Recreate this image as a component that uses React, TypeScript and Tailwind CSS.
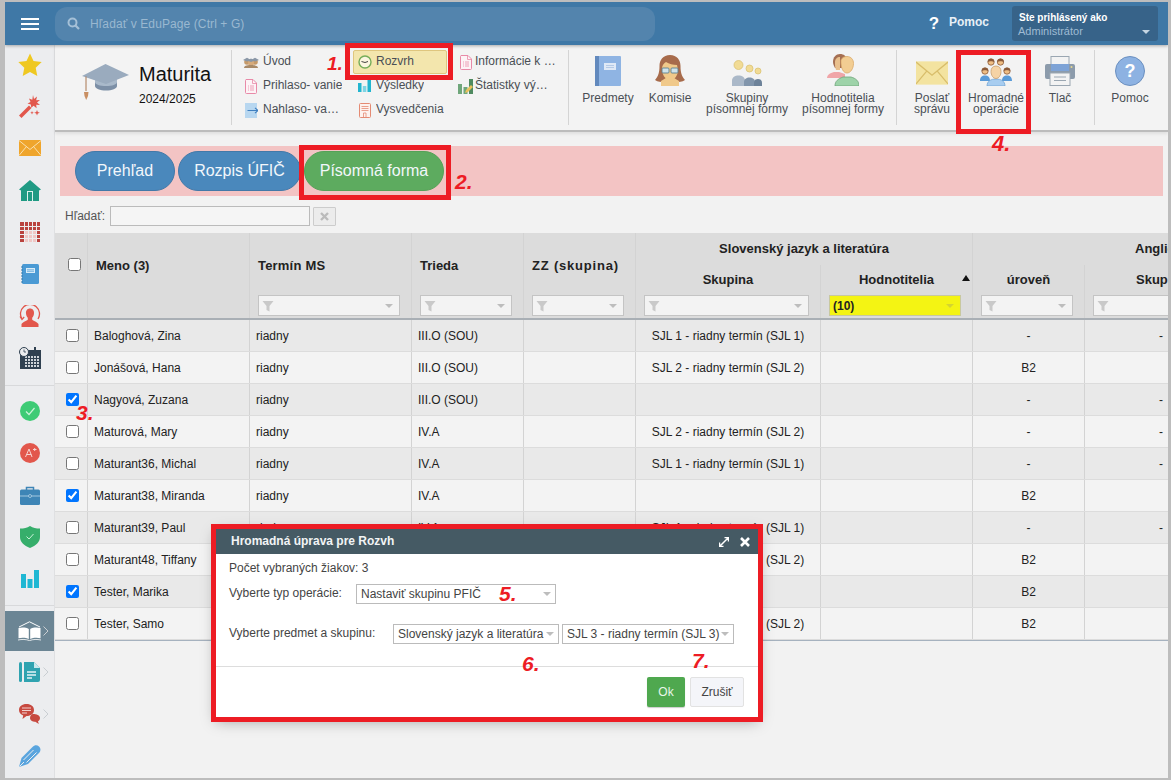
import React from "react";

const GRID = "grid grid-cols-[33px_162px_162px_112px_112px_185px_152px_112px_83px]";

type Row = { n: string; c?: boolean; t: string; z: string; s: string; u: string; l: string };
const rows: Row[] = [
  { n: "Baloghová, Zina", t: "riadny", z: "III.O (SOU)", s: "SJL 1 - riadny termín (SJL 1)", u: "-", l: "-" },
  { n: "Jonášová, Hana", t: "riadny", z: "III.O (SOU)", s: "SJL 2 - riadny termín (SJL 2)", u: "B2", l: "" },
  { n: "Nagyová, Zuzana", c: true, t: "riadny", z: "III.O (SOU)", s: "", u: "-", l: "-" },
  { n: "Maturová, Mary", t: "riadny", z: "IV.A", s: "SJL 2 - riadny termín (SJL 2)", u: "-", l: "-" },
  { n: "Maturant36, Michal", t: "riadny", z: "IV.A", s: "SJL 1 - riadny termín (SJL 1)", u: "-", l: "-" },
  { n: "Maturant38, Miranda", c: true, t: "riadny", z: "IV.A", s: "", u: "B2", l: "" },
  { n: "Maturant39, Paul", t: "riadny", z: "IV.A", s: "SJL 1 - riadny termín (SJL 1)", u: "-", l: "-" },
  { n: "Maturant48, Tiffany", t: "riadny", z: "IV.A", s: "SJL 2 - riadny termín (SJL 2)", u: "B2", l: "" },
  { n: "Tester, Marika", c: true, t: "riadny", z: "IV.A", s: "", u: "B2", l: "" },
  { n: "Tester, Samo", t: "riadny", z: "IV.A", s: "SJL 2 - riadny termín (SJL 2)", u: "B2", l: "" },
];

function Funnel() {
  return (
    <svg width="12" height="12" viewBox="0 0 12 12" className="shrink-0">
      <path d="M0.5 1h11L7.5 6v5.5L4.5 10V6z" fill="#c9c9c9" />
    </svg>
  );
}
function Caret({ color = "#bdbdbd" }: { color?: string }) {
  return (
    <svg width="8" height="4" viewBox="0 0 8 4" className="shrink-0">
      <path d="M0 0h8L4 4z" fill={color} />
    </svg>
  );
}
function Filter({ yellow }: { yellow?: boolean }) {
  return (
    <div
      className={
        yellow
          ? "ml-[8px] mr-[11px] h-[21px] flex items-center justify-between px-[3px] pr-[6px] border border-[#c8c8a0] bg-[#f4f413] text-[12px] font-bold text-[#222]"
          : "ml-[8px] mr-[11px] h-[21px] flex items-center justify-between pl-[3px] pr-[6px] border border-[#c4c4c4] bg-[#f3f3f3]"
      }
    >
      {yellow ? <span>(10)</span> : <Funnel />}
      <Caret color={yellow ? "#d5d530" : "#bdbdbd"} />
    </div>
  );
}
function FilterCell({ clip, yellow }: { clip?: boolean; yellow?: boolean }) {
  return (
    <div className={"border-r border-[#d3d3d3] pt-[3px] " + (clip ? "overflow-hidden border-r-0" : "")}>
      {clip ? (
        <div className="ml-[8px] w-[110px] h-[21px] flex items-center pl-[3px] border border-[#c4c4c4] bg-[#f3f3f3]">
          <Funnel />
        </div>
      ) : (
        <Filter yellow={yellow} />
      )}
    </div>
  );
}

/* ---------- sidebar icons ---------- */
const Star = () => (
  <svg width="24" height="23" viewBox="0 0 24 23"><path d="M12 0.5l3.5 7.6 8.2 1-6 5.7 1.6 8.2L12 18.9 4.700 23l1.6-8.200-6-5.700 8.200-1z" fill="#efc821" /></svg>
);
const Wand = () => (
  <svg width="24" height="24" viewBox="0 0 24 24">
    <path d="M1 21.500L11 11.500l2.500 2.500L3.500 24z" fill="#e2574c" />
    <path d="M15 1l1 4 3-2.500-.8 3.800 3.800-.3-3 2.500 3 2.500-3.800-.2.400 3.400-3-2.400-2.300 2-.5-3.400-3.300-.8 3-1.700-1.500-3.500 3.300 1.300z" fill="#e2574c" />
    <path d="M19 16l.8 2 2 .8-2 .8-.8 2-.8-2-2-.8 2-.8zM14 17l.5 1.200 1.200.5-1.200.5-.5 1.200-.5-1.200-1.200-.5 1.200-.5z" fill="#e2574c" />
  </svg>
);
const MailIcon = ({ w = 22, h = 16, fill = "#efa52c", line = "#fbe6bd" }: { w?: number; h?: number; fill?: string; line?: string }) => (
  <svg width={w} height={h} viewBox="0 0 22 16">
    <rect width="22" height="16" fill={fill} />
    <path d="M0 0.500L11 9.500 22 0.500M0 15.500L7.500 6.500M22 15.500L14.500 6.500" fill="none" stroke={line} strokeWidth="0.900" />
  </svg>
);
const Home = () => (
  <svg width="22" height="21" viewBox="0 0 22 21">
    <path d="M11 0L22 9.500 20 10.500V21H2V10.500L0 9.500z" fill="#1f9a83" />
    <rect x="8" y="11" width="6" height="10" fill="#dff3ee" />
    <rect x="9" y="12" width="4" height="9" fill="#1f9a83" />
  </svg>
);
const Timetable = () => (
  <svg width="20" height="20" viewBox="0 0 20 20">
    <rect width="20" height="20" fill="#b9433f" />
    <path d="M0 4.500h20M0 8.500h20M0 12.500h20M0 16.500h20M4.500 0v20M8.500 0v20M12.500 0v20M16.500 0v20" stroke="#ecedef" strokeWidth="1" />
    <rect x="5" y="9" width="11" height="11" fill="#f0c8c6" />
    <path d="M5 12.500h15M5 16.500h15M8.500 9v11M12.500 9v11M16.500 9v11" stroke="#ecedef" strokeWidth="1" />
  </svg>
);
const Notebook = () => (
  <svg width="18" height="20" viewBox="0 0 18 20">
    <rect x="1" width="17" height="20" rx="1.500" fill="#4a9ad4" />
    <rect x="5" y="4" width="9" height="5" fill="#d8ecf8" />
    <path d="M6 5.800h7M6 7.300h7" stroke="#4a9ad4" strokeWidth=".7" />
    <path d="M0 3h2M0 6h2M0 9h2M0 12h2M0 15h2M0 18h2" stroke="#2f78ad" strokeWidth="1" />
  </svg>
);
const UserRing = () => (
  <svg width="22" height="23" viewBox="0 0 22 23">
    <path d="M3 14a9.500 9.500 0 1 1 16 0" fill="none" stroke="#e2574c" strokeWidth="1.300" />
    <path d="M1 11.500l2 3 2.200-2.500" fill="none" stroke="#e2574c" strokeWidth="1.200" />
    <path d="M11 3.500c2.800 0 4.300 2.200 4 5-.2 2-.9 3.400-1.800 4.300v1.700c0 1 4.800 2 6.300 4.500V22H2.500v-3c1.500-2.500 6.300-3.500 6.300-4.500v-1.700C7.900 11.900 7.200 10.500 7 8.500c-.3-2.800 1.200-5 4-5z" fill="#e2574c" />
  </svg>
);
const CalIcon = () => (
  <svg width="22" height="22" viewBox="0 0 22 22">
    <rect x="1" y="3" width="21" height="19" fill="#2f4050" />
    <rect x="15" y="0" width="2" height="5" fill="#2f4050" />
    <g fill="#cdd3d8">
      {[10, 13, 16, 19].map((y) =>
        [6, 9, 12, 15, 18].map((x) => <rect key={x + "-" + y} x={x} y={y - 1} width="2" height="2" />)
      )}
    </g>
    <circle cx="5" cy="5" r="4.500" fill="#ecedef" stroke="#2f4050" strokeWidth="1" />
    <path d="M5 2.500V5h2" fill="none" stroke="#2f4050" strokeWidth=".8" />
  </svg>
);
const Check = () => (
  <svg width="20" height="20" viewBox="0 0 20 20">
    <circle cx="10" cy="10" r="10" fill="#3ecb75" />
    <path d="M6 10.500l3 3 5.500-6.500" fill="none" stroke="#c9f2d8" strokeWidth="1.200" />
  </svg>
);
const APlus = () => (
  <svg width="20" height="20" viewBox="0 0 20 20">
    <circle cx="10" cy="10" r="10" fill="#e2574c" />
    <path d="M5.500 14l3.500-8 3 8M6.800 11.500h4.500M13 6.500h3.500M14.700 5v3" fill="none" stroke="#f6d4d1" strokeWidth="1" />
  </svg>
);
const Briefcase = () => (
  <svg width="20" height="19" viewBox="0 0 20 19">
    <path d="M6.500 4V1.500h7V4" fill="none" stroke="#3e85b6" strokeWidth="1.500" />
    <rect y="3.500" width="20" height="15.500" rx="1.500" fill="#3e85b6" />
    <path d="M0 10h20" stroke="#bcd8ea" strokeWidth=".8" />
    <circle cx="10" cy="10" r="1.500" fill="#3e85b6" stroke="#bcd8ea" strokeWidth=".7" />
  </svg>
);
const Shield = () => (
  <svg width="20" height="22" viewBox="0 0 20 22">
    <path d="M10 0c3 2 6 2.500 10 2.500V11c0 5-4 8.500-10 11C4 19.500 0 16 0 11V2.500C4 2.500 7 2 10 0z" fill="#36ae6b" />
    <path d="M6.500 10.500l2.500 2.500 4.500-5" fill="none" stroke="#c9f2d8" strokeWidth="1" />
  </svg>
);
const Bars = () => (
  <svg width="18" height="18" viewBox="0 0 18 18">
    <rect x="0" y="4" width="5" height="14" fill="#1fb7d3" />
    <rect x="6.500" y="9" width="5" height="9" fill="#1fb7d3" />
    <rect x="13" y="0" width="5" height="18" fill="#1fb7d3" />
  </svg>
);
const Book = () => (
  <svg width="23" height="20" viewBox="0 0 23 20">
    <path d="M1 6L11.500 0.800 22 6" fill="none" stroke="#fff" strokeWidth="1" />
    <path d="M0.500 7c3-.8 7.500-.8 10.300 1v10c-2.800-1.600-7.300-1.600-10.300-.8zM22.500 7c-3-.8-7.500-.8-10.300 1v10c2.800-1.600 7.300-1.600 10.300-.8z" fill="#fff" />
    <path d="M0 19c4-.8 8-.8 11.500.6 3.500-1.400 7.500-1.400 11.500-.6" fill="none" stroke="#fff" strokeWidth=".8" />
  </svg>
);
const DocTeal = () => (
  <svg width="21" height="20" viewBox="0 0 21 20">
    <rect x="0" y="0" width="3" height="20" rx="1.500" fill="#2fa3b0" />
    <path d="M5 0h10l6 6v12a2 2 0 0 1-2 2H5z" fill="#2fa3b0" />
    <path d="M15 0l6 6h-6z" fill="#c9e9ed" />
    <path d="M8 10h9M8 13h9M8 16h5" stroke="#e3f4f6" strokeWidth="1.300" />
  </svg>
);
const Chat = () => (
  <svg width="21" height="20" viewBox="0 0 21 20">
    <path d="M7.500 0C12 0 15 2.500 15 6s-3 6-7.500 6l-4 3 .7-3.600C1.500 10.500 0 8.500 0 6 0 2.500 3 0 7.500 0z" fill="#c74a40" />
    <path d="M14 10c3.500 0 7 1.300 7 4 0 1.500-.8 2.600-2 3.200l.8 2.800-3.500-2.200c-2.800 0-5.300-1.500-5.300-3.800 0-2 1.500-4 3-4z" fill="#c74a40" />
    <path d="M3 4h9M3 6.500h9M3 9h5" stroke="#f2d0cd" strokeWidth="1" />
  </svg>
);
const Pen = () => (
  <svg width="22" height="22" viewBox="0 0 22 22">
    <path d="M0 22L2.500 13 13.500 2c2-2 4.500-2.200 6.500-.5 2 2 1.800 4.500 0 6.500L9 19z" fill="#5aa5de" />
    <path d="M4.500 15l10-10M7.500 17.500l10-10M0.500 21.500L5 17" fill="none" stroke="#ecedef" strokeWidth="1" />
  </svg>
);

function Chevron() {
  return (
    <svg width="6" height="10" viewBox="0 0 6 10" className="absolute right-[5px] top-1/2 -translate-y-1/2">
      <path d="M0.500 0.500L5 5 0.500 9.500" fill="none" stroke="#c9ced2" strokeWidth="1" />
    </svg>
  );
}
function SideItem({ children, h = "h-[42px]", chev, active }: { children: React.ReactNode; h?: string; chev?: boolean; active?: boolean }) {
  return (
    <div className={"relative flex items-center justify-center " + h + (active ? " bg-[#6b8594]" : "")}>
      {children}
      {chev && <Chevron />}
    </div>
  );
}

/* ---------- toolbar icons ---------- */
const Cap = () => (
  <svg width="47" height="36" viewBox="0 0 47 36">
    <path d="M13 13v9c0 2.500 5 4.500 11 4.500S35 24.500 35 22v-9z" fill="#7c8fa6" />
    <path d="M13 13v5c0 2.500 5 4 11 4s11-1.500 11-4v-5z" fill="#a9b9ca" />
    <path d="M23.500 0L47 11 24 20 0 12z" fill="#9aabbe" />
    <path d="M4 12.500V27" stroke="#a97750" strokeWidth="1" />
    <path d="M2 28h4.500l-.5 4-1.800 4-1.700-4z" fill="#c98f62" />
  </svg>
);
const SmDoc = ({ c = "#e88aa8", bg = "#fdf3f6" }: { c?: string; bg?: string }) => (
  <svg width="12" height="15" viewBox="0 0 12 15">
    <path d="M1 .5h7l3.500 3.500v9.500a1 1 0 0 1-1 1h-9a1 1 0 0 1-1-1V1.500a1 1 0 0 1 1-1z" fill={bg} stroke={c} />
    <path d="M7.500.5v4h4M3 7h1M3 9h1M3 11h1M5 7h4M5 9h4M5 11h4" fill="none" stroke={c} strokeWidth=".8" />
  </svg>
);
const SmArrow = () => (
  <svg width="13" height="15" viewBox="0 0 13 15">
    <rect x="0" y="0" width="12" height="15" fill="#b8d7f0" />
    <path d="M2.500 7.500H13M10 4.800l3 2.700-3 2.700" fill="none" stroke="#3f7fc0" strokeWidth="1.100" />
  </svg>
);
const SmPeople = () => (
  <svg width="16" height="11" viewBox="0 0 16 11">
    <circle cx="4" cy="5" r="2.800" fill="#c59a6a" />
    <circle cx="12" cy="5" r="2.800" fill="#c59a6a" />
    <path d="M0 3L4 .8 8 3 4 4.500zM8 3l4-2.200L16 3l-4 1.500z" fill="#8a97a6" />
    <circle cx="8" cy="6" r="3" fill="#d6ab7c" />
    <path d="M4 3.500L8 1.500 12 3.500 8 5z" fill="#8a97a6" />
    <path d="M1 11c0-2 2-3 7-3s7 1 7 3z" fill="#a98a68" />
  </svg>
);
const SmClock = () => (
  <svg width="14" height="14" viewBox="0 0 14 14">
    <circle cx="7" cy="7" r="6" fill="#fbf6e0" stroke="#76ad5a" strokeWidth="1.400" />
    <path d="M3.500 6.500L7 7.500l3-1" fill="none" stroke="#444" strokeWidth="1" />
  </svg>
);
const SmBars = () => (
  <svg width="13" height="12" viewBox="0 0 13 12">
    <rect x="0" y="3" width="3.500" height="9" fill="#22b5cf" />
    <rect x="4.800" y="6" width="3.500" height="6" fill="#7fd5e4" />
    <rect x="9.500" y="0" width="3.500" height="12" fill="#22b5cf" />
  </svg>
);
const SmCert = () => (
  <svg width="12" height="15" viewBox="0 0 12 15">
    <rect x=".5" y=".5" width="11" height="14" rx="1" fill="#fdf2ee" stroke="#e48a73" />
    <path d="M2.500 3.500h7M2.500 5.500h7M2.500 7.500h7" stroke="#e48a73" strokeWidth=".8" />
    <path d="M4.500 14v-4h2.500v4" fill="none" stroke="#e48a73" strokeWidth=".8" />
  </svg>
);
const SmStats = () => (
  <svg width="16" height="15" viewBox="0 0 16 15">
    <rect x="0" y="5" width="4" height="10" fill="#6fa67a" />
    <rect x="5.500" y="8" width="4" height="7" fill="#6fa67a" />
    <rect x="11" y="0" width="4" height="15" fill="#4f8a60" />
    <path d="M7 14l1-3 5-5 2 2-5 5z" fill="#e8c25c" />
  </svg>
);
const BookBlue = () => (
  <svg width="26" height="30" viewBox="0 0 26 30">
    <rect width="26" height="30" rx="1" fill="#8fb4e3" />
    <rect width="4" height="30" fill="#6289bd" />
    <rect x="9" y="7" width="12" height="7" fill="#dfe9f6" />
    <path d="M11 9.500h8M11 11.500h8" stroke="#a9c2e2" strokeWidth=".8" />
  </svg>
);
const Woman = () => (
  <svg width="30" height="31" viewBox="0 0 30 31">
    <path d="M15 0c7 0 10.500 5 10.500 11 0 6 1 10 4.500 14-3 2-6 2-9 2H9c-3 0-6 0-9-2 3.500-4 4.500-8 4.500-14C4.500 5 8 0 15 0z" fill="#a76b4b" />
    <path d="M7 14c0-4 2-6 4-7 3 2 7 3 11 3l1 5c0 5-3 10-8 10s-8-6-8-11z" fill="#f0c98a" />
    <path d="M6 26c3-2 5-3 6-4h6c1 1 3 2 6 4v5H6z" fill="#f0c98a" />
    <rect x="7" y="13" width="7" height="5" rx="1" fill="#cfe3ea" stroke="#5c7f8e" strokeWidth=".9" />
    <rect x="16" y="13" width="7" height="5" rx="1" fill="#cfe3ea" stroke="#5c7f8e" strokeWidth=".9" />
  </svg>
);
const Groups = () => (
  <svg width="33" height="26" viewBox="0 0 33 26">
    <circle cx="7.500" cy="5" r="4.500" fill="#f1db95" stroke="#d9bf6c" strokeWidth=".7" />
    <circle cx="18.500" cy="8.500" r="3.500" fill="#f1db95" stroke="#d9bf6c" strokeWidth=".7" />
    <circle cx="27" cy="11" r="3" fill="#f1db95" stroke="#d9bf6c" strokeWidth=".7" />
    <path d="M1 26v-5c0-4 3-5.500 6.500-5.500s6.500 1.500 6.500 5.500v5z" fill="#aab8c8" />
    <path d="M13 26v-4c0-3 2.500-4.500 5.500-4.500S24 19 24 22v4z" fill="#8195ab" />
    <path d="M23 26v-3.500c0-2.500 2-3.500 4-3.500s4 1 4 3.500V26z" fill="#6d8299" />
  </svg>
);
const Assessors = () => (
  <svg width="32" height="32" viewBox="0 0 32 32">
    <path d="M6 8c0-5 3-8 7-8s6 2 7 6v8H8c-1-2-2-4-2-6z" fill="#a56f52" />
    <path d="M0 24c0-3 3-5 7-6h5l6 2v4z" fill="#f0a5a8" />
    <path d="M8 8c0-3 2-5 5-5v13H9C8 14 8 11 8 8z" fill="#e9c08d" />
    <path d="M14 6c1-2.500 3.500-3.500 6-3.500 4 0 6.500 3 6.500 7 0 5-3 9.500-6.500 9.500s-6.500-4.500-6-13z" fill="#f2cd92" stroke="#d9a868" strokeWidth=".8" />
    <path d="M8 32c0-5 3-7 8-9h8c5 1.500 8 4 8 9z" fill="#9ed3a9" stroke="#6ea57a" strokeWidth=".8" />
  </svg>
);
const PeopleMany = () => (
  <svg width="32" height="29" viewBox="0 0 32 29">
    <g fill="#efbe84" stroke="#8a5a3a" strokeWidth=".8">
      <circle cx="11" cy="5" r="3.200" />
      <circle cx="20.500" cy="5" r="3.200" />
      <circle cx="5" cy="14" r="3.200" />
      <circle cx="27" cy="14" r="3.200" />
    </g>
    <path d="M7.800 5a3.200 3.200 0 0 1 6.400 0c-1.500-1-5-1-6.400 0zM17.300 5a3.200 3.200 0 0 1 6.400 0c-1.500-1-5-1-6.400 0zM1.800 14a3.200 3.200 0 0 1 6.400 0c-1.500-1-5-1-6.400 0zM23.800 14a3.200 3.200 0 0 1 6.400 0c-1.500-1-5-1-6.400 0z" fill="#8a5a3a" />
    <path d="M0 24c0-4 2-5.500 5-5.500s5 1.500 5 5.500zM22 24c0-4 2-5.500 5-5.500s5 1.500 5 5.500z" fill="#5a9bd8" />
    <path d="M7 29c0-5 4-7 9-7s9 2 9 7z" fill="#a8cdf0" stroke="#6a9fd0" strokeWidth=".7" />
    <path d="M16 9c3.500 0 5 2.500 5 5.500 0 3.500-2 7-5 7s-5-3.500-5-7C11 11.500 12.500 9 16 9z" fill="#f5d3a5" stroke="#c9a06f" strokeWidth=".8" />
  </svg>
);
const Printer = () => (
  <svg width="30" height="30" viewBox="0 0 30 30">
    <rect x="6" y="0.500" width="18" height="10" fill="#f3f3f3" stroke="#9ba7b2" />
    <rect x="0" y="8" width="30" height="15" rx="2" fill="#8c9bab" />
    <rect x="6" y="8" width="18" height="7" fill="#7ea3d6" />
    <rect x="5" y="17" width="20" height="12.500" fill="#f3f3f3" stroke="#9ba7b2" />
    <path d="M9 21h12M9 24.500h12" stroke="#9ba7b2" />
    <circle cx="26.500" cy="11" r="1" fill="#e9d98c" />
  </svg>
);
const HelpBig = () => (
  <svg width="30" height="30" viewBox="0 0 30 30">
    <circle cx="15" cy="15" r="14.500" fill="#8db2e2" stroke="#6b8fbf" />
    <text x="15" y="21" textAnchor="middle" fontSize="18" fontWeight="700" fill="#fff" fontFamily="Liberation Sans, sans-serif">?</text>
  </svg>
);

function SmallTool({ icon, label, w, box, sel }: { icon: React.ReactNode; label: string; w: string; box: string; sel?: boolean }) {
  return (
    <div
      className={
        "h-[24px] flex items-center " +
        w +
        (sel ? " border border-[#dfc67e] rounded-[2px] bg-[#f3e6ad]" : "")
      }
    >
      <div className={"flex justify-center shrink-0 " + box}>{icon}</div>
      <span className="truncate -mt-[2px]">{label}</span>
    </div>
  );
}
function BigTool({ icon, label, w }: { icon: React.ReactNode; label: React.ReactNode; w: string }) {
  return (
    <div className={"flex flex-col items-center " + w}>
      <div className="h-[32px] flex items-end justify-center">{icon}</div>
      <div className="mt-[7px] text-center leading-[11px]">{label}</div>
    </div>
  );
}
const Divider = () => <div className="w-px h-[75px] bg-[#d4d4d4] shrink-0" />;

function Head({ children, cls }: { children?: React.ReactNode; cls: string }) {
  return <div className={"border-r border-[#d3d3d3] " + cls}>{children}</div>;
}
function Sel({ w, label }: { w: string; label: string }) {
  return (
    <div className={"h-[20px] flex items-center justify-between pl-[4px] pr-[4px] border border-[#bbb] bg-white text-[12px] text-[#444] whitespace-nowrap " + w}>
      <span>{label}</span>
      <Caret />
    </div>
  );
}
function Note({ children, cls }: { children: React.ReactNode; cls: string }) {
  return (
    <span className={"absolute z-50 font-bold italic text-[#ed1c24] leading-none pointer-events-none " + cls}>{children}</span>
  );
}
function RedBox({ cls }: { cls: string }) {
  return <div className={"absolute z-40 border-[5px] border-[#ed1c24] pointer-events-none " + cls} />;
}

export default function App() {
  return (
    <div className="relative w-[1171px] h-[780px] overflow-hidden bg-[#bdbdbd] pt-[2px] pb-[2px] pl-[5px] pr-[3px] text-[12px] text-[#222] font-['Liberation_Sans',Arial,sans-serif]">
      <div className="relative w-full h-full flex flex-col overflow-hidden bg-[#f2f2f2]">
        {/* top bar */}
        <header className="relative z-10 h-[43px] shrink-0 flex items-center bg-[#3f78a6] shadow-[0_1px_3px_rgba(0,0,0,0.3)]">
          <div className="w-[50px] flex flex-col items-center gap-[3px]">
            <div className="w-[18px] h-[2px] bg-white" />
            <div className="w-[18px] h-[2px] bg-white" />
            <div className="w-[18px] h-[2px] bg-white" />
          </div>
          <div className="w-[600px] h-[34px] flex items-center rounded-[12px] bg-[#5384ad] pl-[12px]">
            <svg width="13" height="13" viewBox="0 0 13 13">
              <circle cx="5.500" cy="5.500" r="4" fill="none" stroke="#a5c0d7" strokeWidth="2" />
              <path d="M8.500 8.500L12 12" stroke="#a5c0d7" strokeWidth="2.200" />
            </svg>
            <span className="ml-[10px] tracking-[0.1px] text-[#9ab8d0]">Hľadať v EduPage (Ctrl + G)</span>
          </div>
          <span className="ml-[273px] w-[12px] text-center text-[17px] font-bold leading-none text-white">?</span>
          <span className="ml-[9px] -mt-[3px] font-bold text-[#e8f0f6]">Pomoc</span>
          <div className="ml-[23px] w-[146px] h-[35px] rounded-[3px] bg-[#376389] pl-[7px] pt-[5px] relative">
            <div className="text-[10px] font-bold leading-[13px] text-white">Ste prihlásený ako</div>
            <div className="text-[11px] leading-[15px] -ml-px text-[#9fbbd3]">Administrátor</div>
            <div className="absolute right-[8px] top-[24px]">
              <Caret color="#c5d5e2" />
            </div>
          </div>
        </header>

        <div className="flex flex-1 min-h-0">
          {/* sidebar */}
          <aside className="w-[50px] shrink-0 bg-[#ecedef] border-r border-[#dfe0e2] text-center">
            <SideItem h="h-[42px] -mt-[2px]"><Star /></SideItem>
            <SideItem><Wand /></SideItem>
            <SideItem><MailIcon /></SideItem>
            <SideItem><Home /></SideItem>
            <SideItem><Timetable /></SideItem>
            <SideItem><Notebook /></SideItem>
            <SideItem><UserRing /></SideItem>
            <SideItem><CalIcon /></SideItem>
            <div className="mt-[6px] mb-[4px] h-px bg-[#d8d9db]" />
            <SideItem><Check /></SideItem>
            <SideItem><APlus /></SideItem>
            <SideItem><Briefcase /></SideItem>
            <SideItem><Shield /></SideItem>
            <SideItem><Bars /></SideItem>
            <div className="mt-[5px] mb-[5px] h-px bg-[#d8d9db]" />
            <SideItem h="h-[40px]" chev active><Book /></SideItem>
            <SideItem chev><DocTeal /></SideItem>
            <SideItem chev><Chat /></SideItem>
            <SideItem><Pen /></SideItem>
          </aside>

          {/* main */}
          <main className="flex-1 min-w-0 flex flex-col">
            {/* ribbon */}
            <div className="h-[87px] shrink-0 flex items-start pt-[5px] bg-[#f3f3f3] border-b-[2px] border-[#bcbcbc] shadow-[0_2px_3px_rgba(0,0,0,0.08)] text-[#4a4f55]">
              <div className="w-[176px] shrink-0 h-[75px] flex items-start pl-[27px] pt-[14px]">
                <Cap />
                <div className="ml-[10px] -mt-[3px] text-[#111]">
                  <div className="text-[20px] leading-[27px]">Maturita</div>
                  <div className="text-[12px] leading-[14px] mt-[4px]">2024/2025</div>
                </div>
              </div>
              <Divider />
              <div className="w-[336px] shrink-0 flex h-[72px]">
                <div className="w-[121px] flex flex-col">
                  <SmallTool w="w-full" box="ml-[11px] w-[16px] mr-[4px]" icon={<SmPeople />} label="Úvod" />
                  <SmallTool w="w-full" box="ml-[11px] w-[16px] mr-[4px]" icon={<SmDoc />} label="Prihlaso- vanie" />
                  <SmallTool w="w-full" box="ml-[11px] w-[16px] mr-[4px]" icon={<SmArrow />} label="Nahlaso- va…" />
                </div>
                <div className="w-[104px] flex flex-col">
                  <SmallTool w="w-[94px]" sel box="w-[22px]" icon={<SmClock />} label="Rozvrh" />
                  <SmallTool w="w-[94px]" box="w-[23px]" icon={<SmBars />} label="Výsledky" />
                  <SmallTool w="w-[94px]" box="w-[23px]" icon={<SmCert />} label="Vysvedčenia" />
                </div>
                <div className="w-[111px] flex flex-col">
                  <SmallTool w="w-full" box="w-[18px]" icon={<SmDoc />} label="Informácie k …" />
                  <SmallTool w="w-[105px]" box="w-[18px]" icon={<SmStats />} label="Štatistky vý…" />
                </div>
              </div>
              <Divider />
              <div className="w-[327px] shrink-0 flex pl-[8px] pt-[4px]">
                <BigTool w="w-[62px]" icon={<BookBlue />} label="Predmety" />
                <BigTool w="w-[62px]" icon={<Woman />} label="Komisie" />
                <BigTool w="w-[92px]" icon={<Groups />} label={<>Skupiny<br />písomnej formy</>} />
                <BigTool w="w-[100px]" icon={<Assessors />} label={<>Hodnotitelia<br />písomnej formy</>} />
              </div>
              <Divider />
              <div className="w-[197px] shrink-0 flex pl-[5px] pt-[4px]">
                <BigTool w="w-[60px]" icon={<div className="pb-[1px]"><MailIcon w={32} h={24} fill="#f3e3a0" line="#d8bd6a" /></div>} label={<>Poslať<br />správu</>} />
                <BigTool w="w-[68px]" icon={<PeopleMany />} label={<>Hromadné<br />operácie</>} />
                <BigTool w="w-[60px]" icon={<Printer />} label="Tlač" />
              </div>
              <Divider />
              <div className="pl-[5px] pt-[4px]">
                <BigTool w="w-[60px]" icon={<HelpBig />} label="Pomoc" />
              </div>
            </div>

            {/* tabs */}
            <div className="mt-[14px] ml-[5px] mr-[5px] h-[50px] shrink-0 flex items-center gap-[3px] pl-[15px] bg-[#f3c4c4] text-[16px] text-[#f2f7fb]">
              <div className="w-[100px] h-[40px] flex items-center justify-center rounded-[20px] border border-[#4379a8] bg-[#4a88bc]">Prehľad</div>
              <div className="w-[123px] h-[40px] flex items-center justify-center rounded-[20px] border border-[#4379a8] bg-[#4a88bc]">Rozpis ÚFIČ</div>
              <div className="w-[140px] h-[40px] flex items-center justify-center rounded-[20px] border border-[#55a157] bg-[#5dab5f]">Písomná forma</div>
            </div>

            {/* search */}
            <div className="mt-[10px] ml-[10px] h-[20px] shrink-0 flex items-center text-[#555]">
              <span className="w-[45px]">Hľadať:</span>
              <div className="w-[200px] h-[20px] border border-[#bbb] bg-[#f5f5f5]" />
              <div className="ml-[3px] w-[23px] h-[19px] flex items-center justify-center border border-[#ccc] bg-[#ececec] rounded-[1px]">
                <svg width="9" height="9" viewBox="0 0 9 9"><path d="M1 1l7 7M8 1L1 8" stroke="#bbb" strokeWidth="2.400" /></svg>
              </div>
            </div>

            {/* table */}
            <div className="mt-[7px] overflow-hidden">
              <div className={GRID + " grid-rows-[32px_27px_26px] bg-[#dcdcdc] border-b-[2px] border-[#a9afb5] font-bold text-[13px] text-[#222]"}>
                <Head cls="row-span-3 flex justify-start pl-[13px] pt-[25px]"><input type="checkbox" className="w-[13px] h-[13px]" /></Head>
                <Head cls="row-span-3 pl-[8px] pt-[23px]">Meno (3)</Head>
                <Head cls="row-span-2 pl-[8px] pt-[23px] tracking-[0.2px]">Termín MS</Head>
                <Head cls="row-span-2 pl-[8px] pt-[23px]">Trieda</Head>
                <Head cls="row-span-2 pl-[8px] pt-[23px] tracking-[0.8px]">ZZ (skupina)</Head>
                <Head cls="col-span-2 flex items-center justify-center">Slovenský jazyk a literatúra</Head>
                <div className="col-span-2 overflow-hidden whitespace-nowrap pl-[162px] flex items-center">Anglický jazyk</div>
                <Head cls="flex items-center justify-center pt-[2px]">Skupina</Head>
                <Head cls="relative flex items-center justify-center pt-[2px]">
                  Hodnotitelia
                  <span className="absolute right-[2px] top-[10px] w-0 h-0 border-x-[4px] border-x-transparent border-b-[6px] border-b-[#111]" />
                </Head>
                <Head cls="flex items-center justify-center pt-[2px]">úroveň</Head>
                <div className="overflow-hidden whitespace-nowrap pl-[51px] pt-[2px] flex items-center">Skupina</div>
                <FilterCell />
                <FilterCell />
                <FilterCell />
                <FilterCell />
                <FilterCell yellow />
                <FilterCell />
                <FilterCell clip />
              </div>
              {rows.map((r, i) => (
                <div key={r.n} className={GRID + " h-[32px] border-b border-[#dcdcdc] " + (i % 2 === 0 ? "bg-[#e9e9e9]" : "bg-[#f3f3f3]")}>
                  <div className="flex items-center justify-start pl-[11px] border-r border-[#d3d3d3]">
                    <input type="checkbox" defaultChecked={!!r.c} className="w-[13px] h-[13px]" />
                  </div>
                  <div className="flex items-center pl-[6px] border-r border-[#d3d3d3]">{r.n}</div>
                  <div className="flex items-center pl-[6px] border-r border-[#d3d3d3]">{r.t}</div>
                  <div className="flex items-center pl-[6px] border-r border-[#d3d3d3]">{r.z}</div>
                  <div className="border-r border-[#d3d3d3]" />
                  <div className="flex items-center justify-center border-r border-[#d3d3d3]">{r.s}</div>
                  <div className="border-r border-[#d3d3d3]" />
                  <div className="flex items-center justify-center border-r border-[#d3d3d3]">{r.u}</div>
                  <div className="flex items-center justify-end pr-[5px]">{r.l}</div>
                </div>
              ))}
              <div className="h-[1px] bg-[#a6b2bf]" />
            </div>
          </main>
        </div>

        {/* modal */}
        <div className="absolute z-30 left-[211px] top-[527px] w-[542px] h-[188px] flex flex-col bg-white shadow-[0_4px_14px_rgba(0,0,0,0.35)]">
          <div className="h-[25px] shrink-0 flex items-center justify-between pl-[15px] pr-[8px] bg-[#455a64] font-bold text-[#f2f4f5]">
            <span className="-mt-[2px]">Hromadná úprava pre Rozvh</span>
            <div className="flex items-center gap-[11px]">
              <svg width="10" height="10" viewBox="0 0 10 10">
                <path d="M1 9l8-8M5.500 0.500h4v4M0.500 5.500v4h4" fill="none" stroke="#fff" strokeWidth="1.500" />
              </svg>
              <svg width="10" height="10" viewBox="0 0 10 10">
                <path d="M1 1l8 8M9 1L1 9" stroke="#fff" strokeWidth="2.600" />
              </svg>
            </div>
          </div>
          <div className="h-[113px] shrink-0 pl-[13px] text-[#444] border-b border-[#ddd]">
            <div className="mt-[7px] leading-[14px]">Počet vybraných žiakov: 3</div>
            <div className="mt-[9px] flex items-center">
              <span className="w-[127px] -mt-[2px]">Vyberte typ operácie:</span>
              <Sel w="w-[200px]" label="Nastaviť skupinu PFIČ" />
            </div>
            <div className="mt-[20px] flex items-center">
              <span className="w-[164px] -mt-[2px]">Vyberte predmet a skupinu:</span>
              <Sel w="w-[166px]" label="Slovenský jazyk a literatúra" />
              <Sel w="w-[172px] ml-[3px]" label="SJL 3 - riadny termín (SJL 3)" />
            </div>
          </div>
          <div className="flex-1 flex items-start justify-end gap-[5px] pr-[14px] pt-[10px]">
            <div className="w-[38px] h-[30px] flex items-center justify-center rounded-[2px] bg-[#4fa84f] text-[#e9f6e9] shadow-[0_1px_1px_rgba(0,0,0,0.2)]">Ok</div>
            <div className="w-[54px] h-[30px] flex items-center justify-center rounded-[2px] border border-[#e2e2e2] bg-[#f4f5f9] text-[#444]">Zrušiť</div>
          </div>
        </div>
      </div>

      {/* annotations */}
      <RedBox cls="left-[345px] top-[43px] w-[108px] h-[37px]" />
      <RedBox cls="left-[299px] top-[145px] w-[152px] h-[55px]" />
      <RedBox cls="left-[956px] top-[50px] w-[75px] h-[84px]" />
      <RedBox cls="left-[211px] top-[524px] w-[552px] h-[198px]" />
      <Note cls="left-[327px] top-[54px] text-[19px]">1.</Note>
      <Note cls="left-[455px] top-[171px] text-[21px]">2.</Note>
      <Note cls="left-[76px] top-[402px] text-[21px]">3.</Note>
      <Note cls="left-[992px] top-[133px] text-[22px]">4.</Note>
      <Note cls="left-[499px] top-[583px] text-[21px]">5.</Note>
      <Note cls="left-[522px] top-[653px] text-[21px]">6.</Note>
      <Note cls="left-[692px] top-[650px] text-[21px]">7.</Note>
    </div>
  );
}
